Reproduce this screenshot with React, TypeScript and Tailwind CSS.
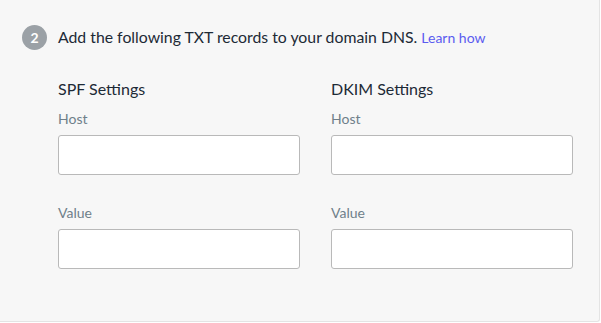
export default function App() {
  const cols = [
    { title: 'SPF Settings' },
    { title: 'DKIM Settings' },
  ];

  return (
    <div className="h-[323px] w-[601px] bg-white" style={{ fontFamily: 'Lato, "Open Sans", sans-serif' }}>
      <div className="h-[322px] w-[600px] rounded-br-[3px] border-r border-b border-[#e4e4e4] bg-[#f7f7f7] pt-[24px] pl-[22px]">
        <div className="flex h-[26px] items-center">
          <div className="flex h-[25px] w-[25px] items-center justify-center rounded-full bg-[#9ba1a6] text-[14px] font-bold text-white">
            2
          </div>
          <p className="ml-[11px] text-[15.8px] text-[#1d2a36]">
            Add the following TXT records to your domain DNS.{' '}
            <a href="#" className="text-[14px] text-[#5b5cf0]">Learn how</a>
          </p>
        </div>

        <div className="mt-[29px] ml-[36px] grid w-[515px] grid-cols-[242px_242px] gap-x-[31px]">
          {cols.map((c) => (
            <div key={c.title} className="flex flex-col">
              <h3 className="text-[16px] leading-[20px] text-[#1d2a36]">{c.title}</h3>
              <label className="mt-[11px] text-[14px] leading-[18px] text-[#6f7f8a]">Host</label>
              <input className="mt-[7px] h-[40px] rounded-[3px] border border-[#b9b9b9] bg-white" />
              <label className="mt-[29px] text-[14px] leading-[18px] text-[#6f7f8a]">Value</label>
              <input className="mt-[7px] h-[40px] rounded-[3px] border border-[#b9b9b9] bg-white" />
            </div>
          ))}
        </div>
      </div>
    </div>
  );
}
